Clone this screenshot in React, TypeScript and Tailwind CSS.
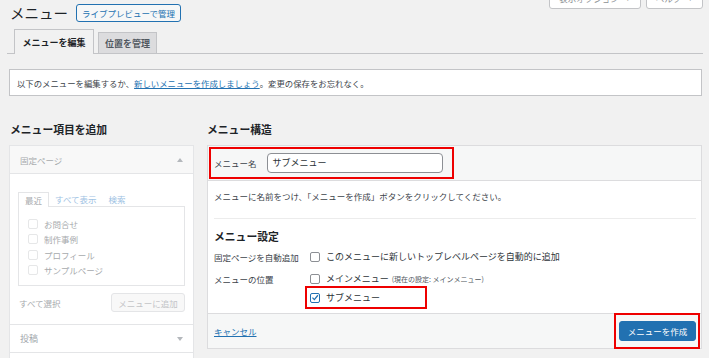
import React from "react";

function Cb({ checked = false, faded = false }: { checked?: boolean; faded?: boolean }) {
  return (
    <span
      className={
        "shrink-0 w-[10px] h-[10px] rounded-[2px] bg-white flex items-center justify-center border " +
        (faded ? "border-[#e6e7e8]" : checked ? "border-[#2271b1]" : "border-[#8c8f94]")
      }
    >
      {checked && (
        <svg width="9" height="9" viewBox="0 0 10 10">
          <path d="M1.8 5.2 L4.2 7.6 L8.6 2.2" fill="none" stroke="#2271b1" strokeWidth="1.6" />
        </svg>
      )}
    </span>
  );
}

function Tri({ up }: { up: boolean }) {
  return (
    <svg width="6" height="4" viewBox="0 0 6 4">
      <path d={up ? "M0 4 L3 0 L6 4 Z" : "M0 0 L6 0 L3 4 Z"} fill="#b4b8bc" />
    </svg>
  );
}

export default function App() {
  return (
    <div className="w-[709px] h-[358px] overflow-hidden bg-[#f1f1f1] text-[#3c434a] font-['Noto_Sans_CJK_JP','Noto_Sans',sans-serif]">
      {/* screen meta links */}
      <div className="h-0 flex justify-end gap-[5px] pr-[6px]">
        <div className="-mt-[13px] h-[22px] w-[92px] bg-white border border-[#c3c4c7] rounded-[3px] text-[8.5px] leading-[10px] text-[#8c8f94] flex items-center justify-center gap-[6px]">
          表示オプション <span className="text-[6px]">▼</span>
        </div>
        <div className="-mt-[13px] h-[22px] w-[57px] bg-white border border-[#c3c4c7] rounded-[3px] text-[8.5px] leading-[10px] text-[#8c8f94] flex items-center justify-center gap-[6px]">
          ヘルプ <span className="text-[6px]">▼</span>
        </div>
      </div>

      {/* title */}
      <div className="flex items-center pl-[10px] pt-[4px] gap-[8px]">
        <div className="text-[14.5px] leading-[18px] text-[#1d2327]">メニュー</div>
        <div className="h-[18px] px-[5px] flex items-center border border-[#2271b1] rounded-[3px] bg-[#f6f7f7] text-[8.5px] leading-[10px] text-[#2271b1]">
          ライブプレビューで管理
        </div>
      </div>

      {/* tabs */}
      <div className="mt-[7px] ml-[7px] mr-[6px] pl-[7px] flex items-end gap-[4px] border-b border-[#c3c4c7]">
        <div className="-mb-px h-[25px] w-[80px] flex items-center justify-center border border-b-0 border-[#c3c4c7] bg-[#f1f1f1] text-[9px] leading-[11px] font-bold text-[#1d2327]">
          メニューを編集
        </div>
        <div className="h-[21px] w-[59px] flex items-center justify-center border border-b-0 border-[#c3c4c7] bg-[#dcdcde] text-[9px] leading-[11px] font-bold text-[#50575e]">
          位置を管理
        </div>
      </div>

      {/* notice */}
      <div className="mt-[15px] ml-[9px] w-[693px] h-[27px] border border-[#c3c4c7] bg-white flex items-center pl-[7px] text-[8.4px] leading-[10px]">
        以下のメニューを編集するか、
        <span className="text-[#2271b1] underline">新しいメニューを作成しましょう</span>
        。変更の保存をお忘れなく。
      </div>

      {/* columns */}
      <div className="flex items-start mt-[26px]">
        {/* left column */}
        <div className="ml-[9px] w-[185px]">
          <div className="pl-[1px] mb-[9px] text-[10.8px] leading-[14px] font-bold text-[#1d2327]">メニュー項目を追加</div>
          <div className="border border-[#e4e5e7] bg-white text-[8.5px] leading-[10px] text-[#a7aaad]">
            <div className="h-[28px] bg-[#f8f8f8] border-b border-[#e4e5e7] flex items-center justify-between pl-[10px] pr-[10px]">
              <span>固定ページ</span>
              <Tri up />
            </div>
            <div className="pt-[18px] px-[8px] pb-[12px]">
              <div className="flex items-end">
                <div className="-mb-px h-[15px] w-[31px] flex items-center justify-center border border-b-0 border-[#e4e5e7] bg-white">
                  最近
                </div>
                <span className="px-[6px] pb-[2px] text-[#9ec2e3]">すべて表示</span>
                <span className="px-[6px] pb-[2px] text-[#9ec2e3]">検索</span>
              </div>
              <div className="h-[80px] border border-[#e4e5e7] pl-[9px] pt-[9px]">
                {["お問合せ", "制作事例", "プロフィール", "サンプルページ"].map((t) => (
                  <div key={t} className="h-[15.5px] flex items-center gap-[6px]">
                    <Cb faded />
                    <span>{t}</span>
                  </div>
                ))}
              </div>
              <div className="mt-[7px] h-[19px] flex items-center justify-between">
                <span className="pl-[1px]">すべて選択</span>
                <div className="w-[74px] h-[19px] border border-[#e4e5e7] bg-[#f8f8f8] rounded-[3px] flex items-center justify-center text-[#c3c4c7]">
                  メニューに追加
                </div>
              </div>
            </div>
            <div className="h-[29px] border-t border-b border-[#e4e5e7] flex items-center justify-between pl-[10px] pr-[10px] text-[9px] text-[#a0a5aa]">
              <span>投稿</span>
              <Tri up={false} />
            </div>
            <div className="h-[29px] flex items-center pl-[10px]">カスタムリンク</div>
          </div>
        </div>

        {/* right column */}
        <div className="ml-[13px] w-[495px]">
          <div className="mb-[9px] text-[10.8px] leading-[14px] font-bold text-[#1d2327]">メニュー構造</div>
          <div className="border border-[#dcdcde] bg-white text-[8.5px] leading-[12px]">
            <div className="h-[35px] bg-[#f6f7f7] border-b border-[#dcdcde] pl-[1px] pt-[1px]">
              <div className="w-[245px] h-[32px] border-2 border-[#ee0000] flex items-center pl-[3px] gap-[10px]">
                <span>メニュー名</span>
                <div className="w-[176px] h-[20px] border border-[#8c8f94] rounded-[4px] bg-white flex items-center pl-[5px] text-[9px] text-[#2c3338]">
                  サブメニュー
                </div>
              </div>
            </div>
            <div className="pt-[9px] pl-[6px] pr-[5px] pb-[4px]">
              <div>メニューに名前をつけ、「メニューを作成」ボタンをクリックしてください。</div>
              <div className="mt-[16px] h-px bg-[#ececec]" />
              <div className="mt-[10px] text-[10.8px] leading-[14px] font-bold text-[#1d2327]">メニュー設定</div>
              <div className="mt-[7px] flex items-center h-[14px]">
                <span className="w-[96px]">固定ページを自動追加</span>
                <Cb />
                <span className="ml-[6px] text-[9px] text-[#2c3338]">このメニューに新しいトップレベルページを自動的に追加</span>
              </div>
              <div className="mt-[8px] flex items-center h-[14px]">
                <span className="w-[96px]">メニューの位置</span>
                <Cb />
                <span className="ml-[6px] text-[9px] text-[#2c3338]">メインメニュー</span>
                <span className="ml-[3px] text-[7px] text-[#50575e]">(現在の設定: メインメニュー)</span>
              </div>
              <div className="ml-[91px] w-[122px] h-[23px] border-2 border-[#ee0000] flex items-center pl-[3px]">
                <Cb checked />
                <span className="ml-[6px] text-[9px] text-[#2c3338]">サブメニュー</span>
              </div>
            </div>
            <div className="h-[35px] border-t border-[#dcdcde] bg-[#f6f7f7] flex items-start justify-between pl-[6px] pr-[1px]">
              <span className="mt-[11px] text-[#2271b1] underline">キャンセル</span>
              <div className="-mt-px w-[86px] h-[36px] border-2 border-[#ee0000] flex items-center pl-[3px]">
                <div className="w-[77px] h-[20px] rounded-[3px] border border-[#2271b1] bg-[#2271b1] text-white flex items-center justify-center">
                  メニューを作成
                </div>
              </div>
            </div>
          </div>
        </div>
      </div>
    </div>
  );
}
